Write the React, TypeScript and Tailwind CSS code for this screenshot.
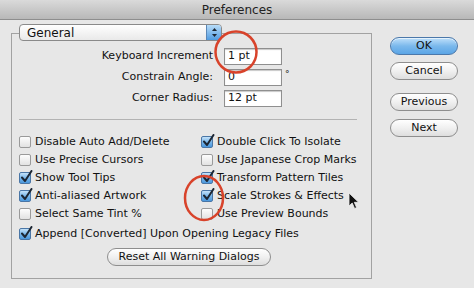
import React from 'react';

const leftChecks: [string, boolean][] = [
  ['Disable Auto Add/Delete', false],
  ['Use Precise Cursors', false],
  ['Show Tool Tips', true],
  ['Anti-aliased Artwork', true],
  ['Select Same Tint %', false],
];

const rightChecks: [string, boolean][] = [
  ['Double Click To Isolate', true],
  ['Use Japanese Crop Marks', false],
  ['Transform Pattern Tiles', true],
  ['Scale Strokes & Effects', true],
  ['Use Preview Bounds', false],
];

function CheckBox({ checked }: { checked: boolean }) {
  return (
    <div
      className={`relative w-[12px] h-[12px] rounded-[2px] border shrink-0 ${
        checked
          ? 'bg-linear-to-b from-[#c4e2f9] via-[#78b6ea] to-[#4a97dc] border-[#4a76a6]'
          : 'bg-linear-to-b from-[#fdfdfd] to-[#e2e2e2] border-[#9a9a9a]'
      }`}
    >
      {checked && (
        <svg className="absolute -top-[3px] left-[0px]" width="13" height="14" viewBox="0 0 13 14">
          <path d="M2 7.5 L5 11 L11.5 1" fill="none" stroke="#1c2633" strokeWidth="2" strokeLinecap="round" strokeLinejoin="round" />
        </svg>
      )}
    </div>
  );
}

function CheckRow({ label, checked }: { label: string; checked: boolean }) {
  return (
    <div className="flex items-center h-[18px]">
      <CheckBox checked={checked} />
      <span className="ml-[4px] whitespace-nowrap">{label}</span>
    </div>
  );
}

function AquaButton({ label, primary }: { label: string; primary?: boolean }) {
  return (
    <div
      className={`flex items-center justify-center h-[18px] rounded-full border text-[11px] ${
        primary
          ? 'bg-linear-to-b from-[#bfe0fa] via-[#7bb9ec] to-[#5aa5e6] border-[#4b78aa] shadow-[inset_0_1px_0_#e4f2fd]'
          : 'bg-linear-to-b from-[#ffffff] via-[#f0f0f0] to-[#dedede] border-[#8e8e8e]'
      }`}
    >
      {label}
    </div>
  );
}

function Field({ label, value, suffix }: { label: string; value: string; suffix?: string }) {
  return (
    <div className="flex items-center h-[17px]">
      <div className="w-[201px] text-right whitespace-nowrap">{label}</div>
      <div className="ml-[11px] w-[58px] h-[17px] bg-white border border-[#8f8f8f] shadow-[inset_0_1px_1px_#c8c8c8] flex items-center pl-[3px]">
        {value}
      </div>
      {suffix && <span className="ml-[3px] -mt-[6px] text-[9px]">{suffix}</span>}
    </div>
  );
}

export default function App() {
  return (
    <div className="relative w-[474px] h-[288px] overflow-hidden bg-[#e7e7e7] text-[11px] text-[#111] font-['DejaVu_Sans',sans-serif]">
      {/* title bar */}
      <div className="h-[20px] bg-linear-to-b from-[#dadada] to-[#b8b8b8] border-b border-[#8e8e8e] flex items-center justify-center text-[12px] text-[#222]">
        Preferences
      </div>

      <div className="flex pl-[11px] pt-[13px]">
        {/* group box */}
        <div className="w-[361px] h-[246px] border border-[#a2a2a2] flex flex-col">
          <div className="-mt-[10px] ml-[7px] w-[203px] h-[17px] flex rounded-[4px] border border-[#8a8a8a] overflow-hidden bg-linear-to-b from-[#ffffff] to-[#e9e9e9]">
            <div className="flex-1 pl-[7px] flex items-center text-[12px]">General</div>
            <div className="w-[15px] border-l border-[#5b87b6] bg-linear-to-b from-[#b7dcf8] to-[#4f9be0] flex items-center justify-center">
              <svg width="7" height="11" viewBox="0 0 7 11">
                <path d="M3.5 1 L6 4 L1 4 Z" fill="#1c2633" />
                <path d="M3.5 10 L6 7 L1 7 Z" fill="#1c2633" />
              </svg>
            </div>
          </div>

          <div className="mt-[7px] flex flex-col gap-[4px]">
            <Field label="Keyboard Increment" value="1 pt" />
            <Field label="Constrain Angle:" value="0" suffix="°" />
            <Field label="Corner Radius:" value="12 pt" />
          </div>

          <div className="mt-[12px] ml-[7px] w-[338px] h-px bg-[#b3b3b3]" />

          <div className="mt-[13px] ml-[7px] grid grid-cols-[182px_1fr]">
            <div className="flex flex-col">
              {leftChecks.map(([label, checked]) => (
                <CheckRow key={label} label={label} checked={checked} />
              ))}
            </div>
            <div className="flex flex-col">
              {rightChecks.map(([label, checked]) => (
                <CheckRow key={label} label={label} checked={checked} />
              ))}
            </div>
          </div>
          <div className="ml-[7px] mt-[2px]">
            <CheckRow label="Append [Converted] Upon Opening Legacy Files" checked />
          </div>

          <div className="mt-[5px] ml-[95px] w-[164px]">
            <AquaButton label="Reset All Warning Dialogs" />
          </div>
        </div>

        {/* buttons */}
        <div className="ml-[18px] mt-[4px] w-[68px] flex flex-col">
          <AquaButton label="OK" primary />
          <div className="mt-[7px]">
            <AquaButton label="Cancel" />
          </div>
          <div className="mt-[13px]">
            <AquaButton label="Previous" />
          </div>
          <div className="mt-[8px]">
            <AquaButton label="Next" />
          </div>
        </div>
      </div>

      {/* red annotation circles */}
      <svg className="absolute left-[212px] top-[28px]" width="48" height="48" viewBox="0 0 48 48">
        <circle cx="24" cy="24" r="20.5" fill="none" stroke="#d8432b" strokeWidth="2.5" />
      </svg>
      <svg className="absolute left-[182px] top-[173px]" width="44" height="50" viewBox="0 0 44 50">
        <ellipse cx="22" cy="25" rx="19" ry="22" fill="none" stroke="#d8432b" strokeWidth="2.5" />
      </svg>

      {/* mouse cursor */}
      <svg className="absolute left-[348px] top-[192px]" width="13" height="18" viewBox="0 0 13 18">
        <path d="M1 1 L1 14 L4.2 11 L6.6 16.5 L8.6 15.6 L6.3 10.3 L10.6 10.3 Z" fill="#111" stroke="#f0f0f0" strokeWidth="0.8" />
      </svg>
    </div>
  );
}
